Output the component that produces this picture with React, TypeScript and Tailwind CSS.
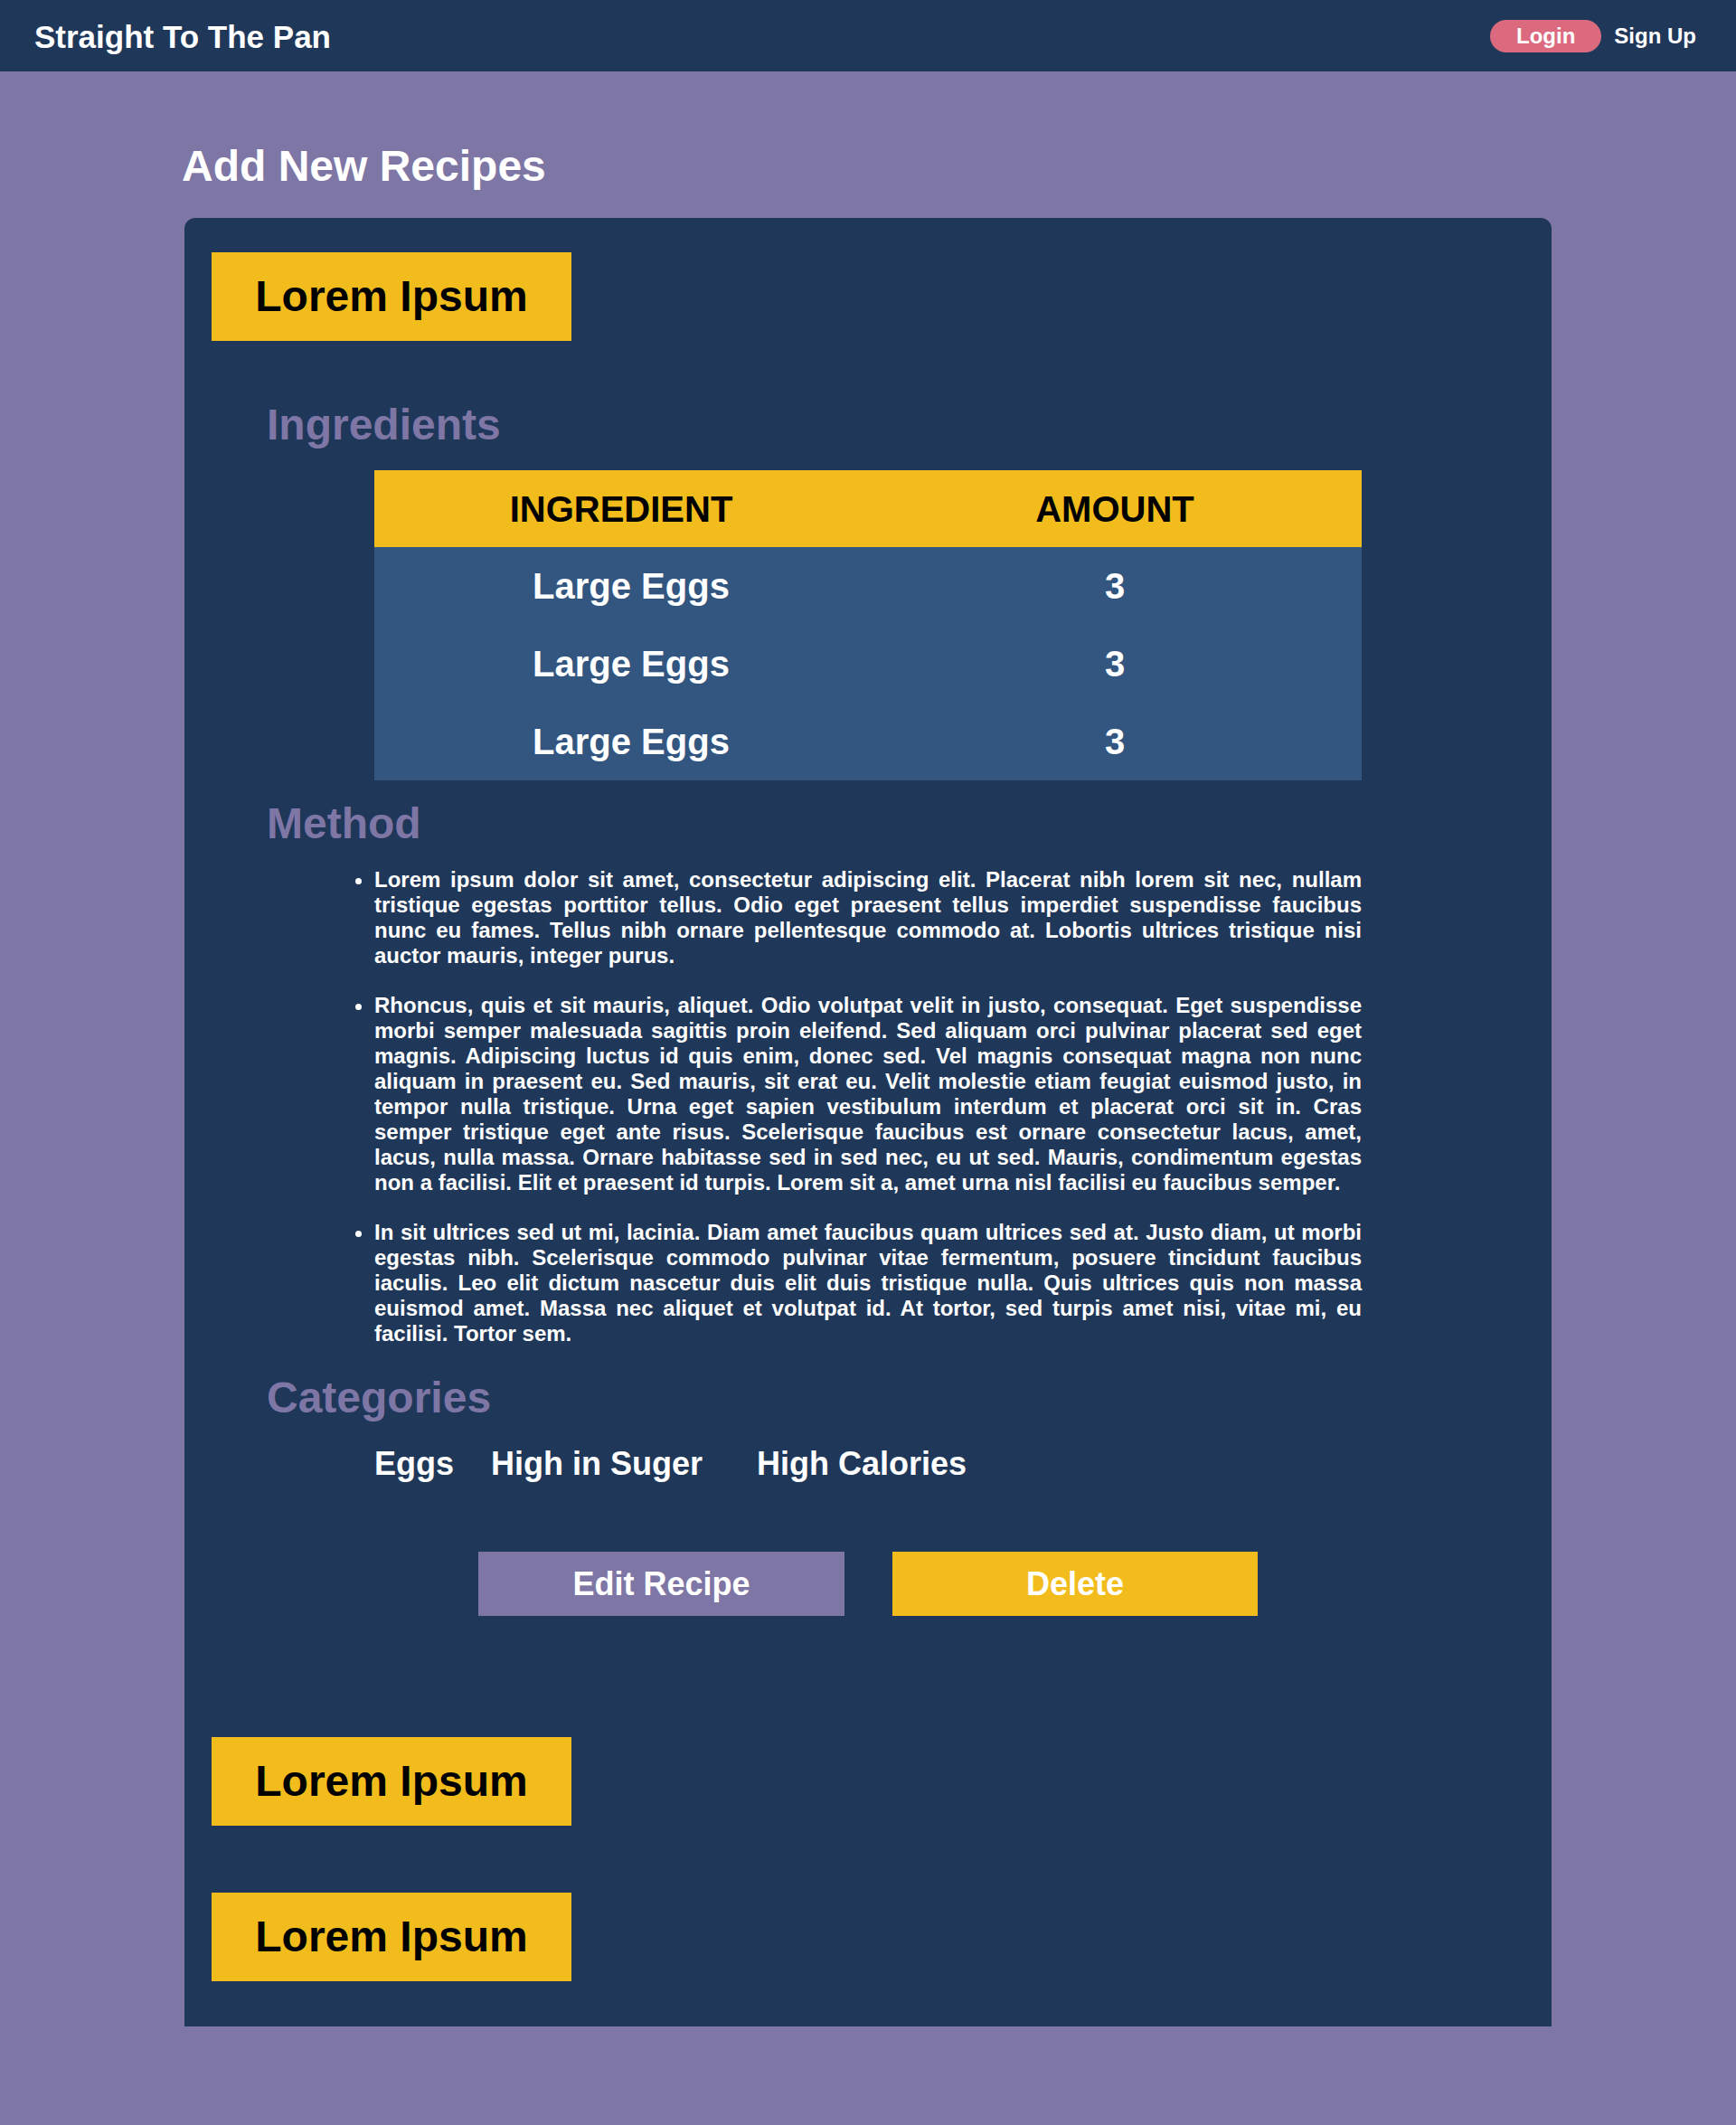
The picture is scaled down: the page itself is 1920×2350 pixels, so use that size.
import React from 'react'

const paragraphs = [
  'Lorem ipsum dolor sit amet, consectetur adipiscing elit. Placerat nibh lorem sit nec, nullam tristique egestas porttitor tellus. Odio eget praesent tellus imperdiet suspendisse faucibus nunc eu fames. Tellus nibh ornare pellentesque commodo at. Lobortis ultrices tristique nisi auctor mauris, integer purus.',
  'Rhoncus, quis et sit mauris, aliquet. Odio volutpat velit in justo, consequat. Eget suspendisse morbi semper malesuada sagittis proin eleifend. Sed aliquam orci pulvinar placerat sed eget magnis. Adipiscing luctus id quis enim, donec sed. Vel magnis consequat magna non nunc aliquam in praesent eu. Sed mauris, sit erat eu. Velit molestie etiam feugiat euismod justo, in tempor nulla tristique. Urna eget sapien vestibulum interdum et placerat orci sit in. Cras semper tristique eget ante risus. Scelerisque faucibus est ornare consectetur lacus, amet, lacus, nulla massa. Ornare habitasse sed in sed nec, eu ut sed. Mauris, condimentum egestas non a facilisi. Elit et praesent id turpis. Lorem sit a, amet urna nisl facilisi eu faucibus semper.',
  'In sit ultrices sed ut mi, lacinia. Diam amet faucibus quam ultrices sed at. Justo diam, ut morbi egestas nibh. Scelerisque commodo pulvinar vitae fermentum, posuere tincidunt faucibus iaculis. Leo elit dictum nascetur duis elit duis tristique nulla. Quis ultrices quis non massa euismod amet. Massa nec aliquet et volutpat id. At tortor, sed turpis amet nisi, vitae mi, eu facilisi. Tortor sem.',
]

const ingredients = [
  { name: 'Large Eggs', amount: 3 },
  { name: 'Large Eggs', amount: 3 },
  { name: 'Large Eggs', amount: 3 },
]

function RecipeTitle({ title }: { title: string }) {
  return (
    <div className="flex h-[98px] w-[398px] items-center justify-center bg-[#f2bd1c] text-[48px] leading-none text-black">
      {title}
    </div>
  )
}

function SectionHeading({ children }: { children: React.ReactNode }) {
  return <h2 className="pl-[91px] text-[48px] leading-none text-[#7e76a5]">{children}</h2>
}

export default function App() {
  return (
    <div className="min-h-[2350px] bg-[#7e76a5] font-['Liberation_Sans',Arial,sans-serif] font-bold text-white">
      <header className="flex h-[79px] items-center justify-between bg-[#1f3759] pl-[38px] pr-[44px]">
        <span className="pt-[2px] text-[35px] leading-none">Straight To The Pan</span>
        <nav className="flex items-center gap-[14px] text-[24px] leading-none">
          <button className="rounded-full bg-[#dc6a7f] px-[29px] py-[6px]">Login</button>
          <button>Sign Up</button>
        </nav>
      </header>

      <main className="mx-auto w-[1512px] pb-[109px]">
        <h1 className="mt-[81px] -ml-[3px] text-[48px] leading-none">Add New Recipes</h1>

        <section className="mt-[33px] rounded-t-[12px] bg-[#1f3759] pt-[38px] pb-[50px]">
          <div className="pl-[30px]">
            <RecipeTitle title="Lorem Ipsum" />
          </div>

          <div className="mt-[69px]">
            <SectionHeading>Ingredients</SectionHeading>
            <div className="mx-auto mt-[26px] w-[1092px]">
              <table className="w-full table-fixed border-collapse text-[40px] leading-none">
                <thead>
                  <tr className="h-[85px] bg-[#f2bd1c] text-black">
                    <th className="font-bold">INGREDIENT</th>
                    <th className="font-bold">AMOUNT</th>
                  </tr>
                </thead>
                <tbody className="bg-[#335681]">
                  {ingredients.map((row, i) => (
                    <tr key={i} className="h-[86px]">
                      <td className="pl-[22px] text-center">{row.name}</td>
                      <td className="text-center">{row.amount}</td>
                    </tr>
                  ))}
                </tbody>
              </table>
            </div>
          </div>

          <div className="mt-[24px]">
            <SectionHeading>Method</SectionHeading>
            <ul className="mx-auto mt-[24px] flex w-[1092px] list-disc flex-col gap-[27px] text-justify text-[24px] leading-[28px]">
              {paragraphs.map((p, i) => (
                <li key={i}>{p}</li>
              ))}
            </ul>
          </div>

          <div className="mt-[33px]">
            <SectionHeading>Categories</SectionHeading>
            <div className="mx-auto mt-[31px] flex w-[1092px] text-[36px] leading-none">
              <span>Eggs</span>
              <span className="ml-[41px]">High in Suger</span>
              <span className="ml-[60px]">High Calories</span>
            </div>
          </div>

          <div className="mt-[79px] flex justify-center gap-[53px] text-[36px] leading-none">
            <button className="h-[71px] w-[405px] bg-[#7e76a5]">Edit Recipe</button>
            <button className="h-[71px] w-[404px] bg-[#f2bd1c]">Delete</button>
          </div>

          <div className="mt-[134px] flex flex-col gap-[74px] pl-[30px]">
            <RecipeTitle title="Lorem Ipsum" />
            <RecipeTitle title="Lorem Ipsum" />
          </div>
        </section>
      </main>
    </div>
  )
}
